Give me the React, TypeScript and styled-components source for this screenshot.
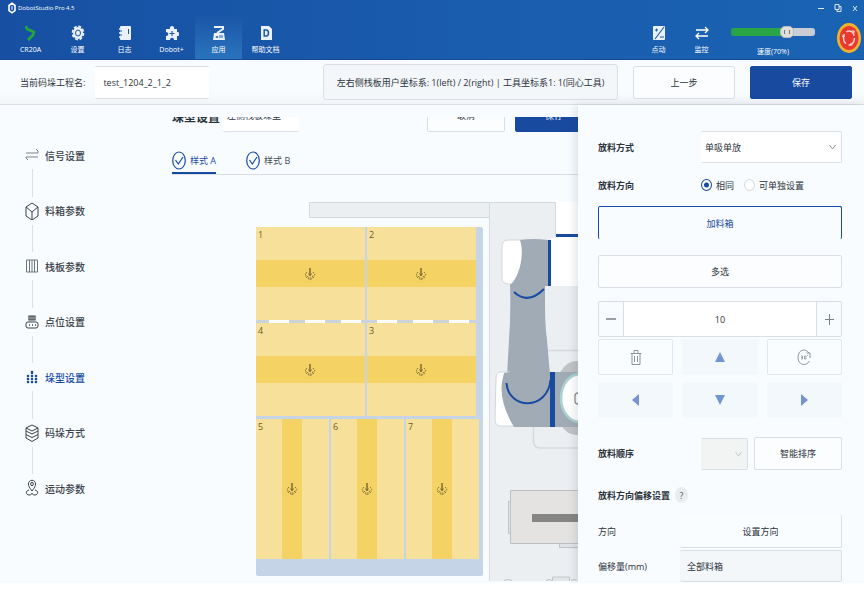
import React, { useState } from "react";
import styled, { createGlobalStyle, css } from "styled-components";

const blue = "#184a9f";
const line = "#d9dfe4";
const ink = "#2b333b";

const GlobalStyle = createGlobalStyle`
  * { box-sizing: border-box; }
  body { margin: 0; background: #fff; }
  body, button, input, select {
    font-family: "Open Sans", "Noto Sans CJK SC", sans-serif;
    font-size: 9px;
    color: ${ink};
  }
  button { padding: 0; cursor: pointer; }
  svg { display: block; }
`;

/* ---------- header ---------- */

const Header = styled.header`
  background: linear-gradient(90deg, #1750a3, #1a5dae 60%, #1a63b3);
  border-bottom: 1px solid #164a94;
  color: #fff;
`;

const TitleBar = styled.div`
  display: flex;
  align-items: center;
  height: 16px;
  padding: 0 5px 0 8px;
  gap: 2px;
  font-size: 6px;
`;

const WindowButtons = styled.div`
  display: flex;
  gap: 9px;
  margin-left: auto;
`;

const WindowButton = styled.button`
  width: 8px;
  height: 10px;
  border: 0;
  background: none;
  color: #fff;
`;

const Toolbar = styled.div`
  display: flex;
  height: 43px;
  padding-left: 7px;
`;

const Tool = styled.button<{ $active?: boolean; $narrow?: boolean }>`
  display: flex;
  flex-direction: column;
  align-items: center;
  justify-content: center;
  gap: 3px;
  width: ${(p) => (p.$narrow ? 43 : 47)}px;
  padding-top: 5px;
  border: 0;
  background: ${(p) => (p.$active ? "linear-gradient(#1b56a7, #2a74bd)" : "none")};
  color: #fff;
  font-size: 7px;
  line-height: 11px;
  white-space: nowrap;
`;

const ToolbarEnd = styled.div`
  display: flex;
  margin-left: auto;
  padding-right: 3px;
`;

const Speed = styled.label`
  display: flex;
  flex-direction: column;
  align-items: center;
  gap: 8px;
  width: 84px;
  margin: 10px 22px 0 8px;
  font-size: 7px;
  line-height: 11px;
`;

const SpeedRange = styled.input<{ $value: number }>`
  appearance: none;
  width: 100%;
  height: 12px;
  margin: 0;
  background: none;
  &::-webkit-slider-runnable-track {
    height: 8px;
    border-radius: 3px;
    background: linear-gradient(90deg, #2aa545 ${(p) => p.$value}%, #c9ced6 ${(p) => p.$value}%);
  }
  &::-webkit-slider-thumb {
    appearance: none;
    width: 14px;
    height: 12px;
    margin-top: -2px;
    border: 1px solid #b9b9b9;
    border-radius: 5px;
    background:
      linear-gradient(90deg, transparent 3px, #777 3px 4px, transparent 4px 8px, #777 8px 9px, transparent 9px) center / 100% 4px no-repeat,
      #dedede;
  }
`;

const StopButton = styled.button`
  align-self: center;
  border: 0;
  background: none;
`;

/* ---------- project bar ---------- */

const ProjectBar = styled.div`
  display: flex;
  align-items: center;
  gap: 15px;
  height: 45px;
  padding: 0 12px 0 20px;
  border-bottom: 1px solid ${line};
  background: linear-gradient(#f8fcff 70%, #f2f5f8);
`;

const ProjectLabel = styled.label`
  display: flex;
  align-items: center;
  gap: 10px;
  margin-right: auto;
  white-space: nowrap;
`;

const ProjectInput = styled.input`
  width: 114px;
  height: 33px;
  padding: 0 8px;
  border: 1px solid ${line};
  border-width: 1px 0;
  border-radius: 2px;
  background: #fff;
`;

const StatusBox = styled.div`
  display: flex;
  align-items: center;
  justify-content: center;
  min-width: 295px;
  height: 36px;
  border: 1px solid ${line};
  border-radius: 3px;
  background: #f4f7fa;
  white-space: nowrap;
`;

const Button = styled.button<{ $kind?: "primary" | "outline"; $width?: number }>`
  flex-shrink: 0;
  width: ${(p) => (p.$width ? p.$width + "px" : "100%")};
  height: 33px;
  border: 1px solid ${line};
  border-radius: 2px;
  background: #fbfdff;
  ${(p) =>
    p.$kind === "primary" &&
    css`
      border-color: ${blue};
      background: ${blue};
      color: #fff;
    `}
  ${(p) =>
    p.$kind === "outline" &&
    css`
      border-color: ${blue};
      border-bottom: 0;
      background: #f8fcff;
      color: ${blue};
    `}
`;

/* ---------- body ---------- */

const Body = styled.div`
  display: grid;
  grid-template-columns: 172px minmax(0, 1fr) 286px;
  background: #f8fcff;
`;

const StepsNav = styled.nav`
  display: flex;
`;

const Steps = styled.ol`
  display: flex;
  flex-direction: column;
  margin: 0;
  padding: 41px 0 86px 24px;
  list-style: none;
`;

const StepItem = styled.li`
  display: flex;
  flex-direction: column;
  &:not(:last-child) {
    flex: 1;
  }
  &:not(:last-child)::after {
    content: "";
    flex: 1;
    width: 1px;
    margin: 5px 0 5px 8px;
    background: #dcdfe4;
  }
`;

const StepLink = styled.a<{ $active: boolean }>`
  display: flex;
  align-items: center;
  gap: 5px;
  height: 18px;
  color: ${(p) => (p.$active ? blue : "#3b424a")};
  font-size: 10px;
  font-weight: 500;
  text-decoration: none;
`;

const Main = styled.main`
  display: flex;
  flex-direction: column;
  padding-top: 12px;
`;

const Viewport = styled.div`
  display: flex;
  flex: 1;
  flex-direction: column;
  overflow: hidden;
`;

const SettingsRow = styled.div`
  display: flex;
  align-items: center;
  margin: -18px -15px 0 0;
  gap: 10px;
`;

const Heading = styled.h2`
  flex-shrink: 0;
  width: 41px;
  margin: 2px 0 0;
  font-size: 12px;
  font-weight: 700;
  white-space: nowrap;
`;

const PatternSelect = styled.select`
  appearance: none;
  width: 76px;
  height: 33px;
  margin-right: auto;
  padding: 0 4px;
  border: 0;
  border-bottom: 1px solid ${line};
  border-radius: 2px;
  background: #fff;
`;

const Tabs = styled.div`
  display: flex;
  gap: 30px;
  height: 43px;
  padding-top: 17px;
  border-bottom: 1px solid ${line};
`;

const Tab = styled.button<{ $active: boolean }>`
  display: flex;
  align-items: center;
  gap: 4px;
  border: 0;
  border-bottom: 2px solid ${(p) => (p.$active ? blue : "transparent")};
  background: none;
  color: ${(p) => (p.$active ? blue : "#454c54")};
`;

const Scene = styled.div`
  position: relative;
  flex: 1;
  padding: 52px 0 7px 84px;
`;

const SceneDrawing = styled.svg`
  position: absolute;
  inset: 0;
  width: 100%;
  height: 100%;
`;

const Pallet = styled.div`
  position: relative;
  width: 227px;
  padding: 0 4px 17px 0;
  border-radius: 2px;
  background: #c6d4e7;
`;

const BoxRow = styled.div<{ $columns: number }>`
  display: grid;
  grid-template-columns: repeat(${(p) => p.$columns}, 1fr);
  gap: 2px;
  height: ${(p) => (p.$columns === 3 ? 140 : 93)}px;
  margin-right: ${(p) => (p.$columns === 3 ? 0 : 3)}px;
`;

const Dashes = styled.div`
  height: 3px;
  margin-right: 3px;
  background: repeating-linear-gradient(90deg, #cbd3db 0 13px, #fff 13px 33px, #cbd3db 33px 36px);
`;

const RowGap = styled.div`
  height: 3px;
`;

const Box = styled.div<{ $vertical?: boolean }>`
  position: relative;
  display: flex;
  align-items: center;
  justify-content: center;
  padding-right: 2px;
  color: #6b5c2c;
  background: ${(p) =>
    p.$vertical
      ? "linear-gradient(90deg, #f7e19a 36%, #f4d264 36% 63%, #f7e19a 63%)"
      : "linear-gradient(#f7e19a 36%, #f4d264 36% 64%, #f7e19a 64%)"};
`;

const BoxNumber = styled.span`
  position: absolute;
  top: 2px;
  left: 2px;
  font-size: 9px;
  line-height: 12px;
`;

/* ---------- side panel ---------- */

const Panel = styled.aside`
  position: relative;
  display: flex;
  flex-direction: column;
  padding: 26px 22px 1px 20px;
  background: #f9fcff;
  box-shadow: -3px 0 8px rgba(60, 70, 90, 0.14);
`;

const Field = styled.div<{ $top?: number; $label?: number }>`
  display: grid;
  grid-template-columns: ${(p) => p.$label ?? 103}px minmax(0, 1fr);
  align-items: center;
  margin-top: ${(p) => p.$top ?? 0}px;
`;

const FieldLabel = styled.label<{ $strong?: boolean }>`
  font-weight: ${(p) => (p.$strong ? 600 : 400)};
  white-space: nowrap;
`;

const SelectWrap = styled.div`
  display: grid;
  align-items: center;
  > * {
    grid-area: 1 / 1;
  }
  > svg {
    justify-self: end;
    margin-right: 6px;
    pointer-events: none;
  }
`;

const Select = styled.select`
  appearance: none;
  width: 100%;
  height: 32px;
  padding: 0 3px;
  border: 1px solid ${line};
  border-left-color: transparent;
  border-radius: 2px;
  background: #fff;
  opacity: 1;
  &:disabled {
    background: #f2f3f3;
  }
`;

const RadioGroup = styled.div`
  display: flex;
  align-items: center;
  gap: 10px;
  height: 14px;
`;

const RadioLabel = styled.label`
  display: flex;
  align-items: center;
  gap: 4px;
`;

const Radio = styled.input`
  appearance: none;
  width: 11px;
  height: 12px;
  margin: 0;
  border: 1px solid #d6dade;
  border-radius: 50%;
  background: #fff;
  &:checked {
    border-color: ${blue};
    background: radial-gradient(circle, ${blue} 2px, #fff 3px);
  }
`;

const Stack = styled.div`
  display: flex;
  flex-direction: column;
  gap: 16px;
  margin-top: 14px;
`;

const Stepper = styled.div`
  display: grid;
  grid-template-columns: 24px 1fr 24px;
  height: 36px;
  margin-top: 13px;
  border: 1px solid ${line};
  border-radius: 2px;
`;

const StepperButton = styled.button`
  display: grid;
  place-items: center;
  border: 0;
  background: none;
  color: #7b8188;
`;

const StepperInput = styled.input`
  width: 100%;
  border: 1px solid ${line};
  border-width: 0 1px;
  background: #fff;
  text-align: center;
`;

const PadGrid = styled.div`
  display: grid;
  grid-template-columns: repeat(3, 1fr);
  gap: 7px 9px;
  margin-top: 2px;
`;

const PadButton = styled.button<{ $framed?: boolean }>`
  display: grid;
  place-items: center;
  height: 36px;
  border: 1px solid ${(p) => (p.$framed ? "#e3e8ec" : "#f4f9fd")};
  border-radius: 2px;
  background: ${(p) => (p.$framed ? "#fafdff" : "#f3f8fc")};
  color: ${(p) => (p.$framed ? "#8d949b" : "#7296cf")};
`;

const OrderControls = styled.div`
  display: grid;
  grid-template-columns: 47px minmax(0, 1fr);
  gap: 6px;
`;

const OffsetTitle = styled.div`
  display: flex;
  align-items: center;
  gap: 5px;
  height: 16px;
  margin-top: 17px;
  font-weight: 600;
`;

const HelpButton = styled.button`
  width: 13px;
  height: 16px;
  border: 0;
  border-radius: 50%;
  background: #e9edf0;
  color: #555c63;
`;

const DirectionButton = styled.button`
  width: 100%;
  height: 33px;
  border: 1px solid ${line};
  border-width: 0 1px 1px 0;
  border-radius: 2px;
  background: #fafdff;
`;

const OffsetInput = styled.input`
  width: 100%;
  height: 32px;
  padding: 0 7px;
  border: 1px solid ${line};
  border-left: 0;
  border-radius: 2px;
  background: #f4f7fa;
`;

/* ---------- icons ---------- */

const Chevron = ({ color = "#8b9197" }: { color?: string }) => (
  <svg width="7" height="6" viewBox="0 0 7 6" fill="none" stroke={color}>
    <path d="M.5 1 3.5 5l3-4" />
  </svg>
);

const LogoIcon = () => (
  <svg width="8" height="12" viewBox="0 0 8 12" fill="none" stroke="#fff" strokeWidth="1.6">
    <path d="M4 1.2 7 3.5v5L4 10.8 1 8.5v-5z" />
    <path d="M4 4v4" strokeWidth="1" />
  </svg>
);

const robotIcon = (
  <path d="m2 1 1 3 7 3-1 3-5 5" fill="none" stroke="#25a63d" strokeWidth="2.6" strokeLinejoin="round" />
);
const gearIcon = (
  <>
    <ellipse cx="7" cy="8" rx="5" ry="6" fill="#eaf1fb" />
    <ellipse cx="7" cy="8" rx="5.4" ry="6.6" fill="none" stroke="#eaf1fb" strokeWidth="1.8" strokeDasharray="3 1.7" />
    <ellipse cx="7" cy="8" rx="2.5" ry="3" fill="none" stroke="#1c55a8" />
  </>
);
const logIcon = (
  <>
    <rect x="2" y="1" width="11" height="14" rx="1" fill="#eaf1fb" />
    <path d="M1 4h3M1 8h3M1 12h3" stroke="#eaf1fb" strokeWidth="1.5" />
    <path d="M2 6h2M2 10h2M10.5 4v5" stroke="#1c55a8" strokeWidth="1" />
  </>
);
const pluginIcon = (
  <>
    <path d="M2 4h3C4 0 10 0 9 4h3v3c3-1 3 5 0 4v4H9c0-3-4-3-4 0H1v-4c3 0 3-4 0-4V4z" fill="#eaf1fb" />
    <path d="M7 6v5M4.5 8.5h5" stroke="#1c55a8" strokeWidth="1.1" />
  </>
);
const appIcon = (
  <>
    <path d="M2 2h9v2L5 8" fill="none" stroke="#eaf1fb" strokeWidth="2" />
    <path d="M2 8h10l1 7H1z" fill="#eaf1fb" />
    <path d="m4 13 1-2 1 2m2-3v3m2-3v3" stroke="#2564b0" fill="none" />
  </>
);
const docIcon = (
  <>
    <path d="M2 1h8l3 3v11H2z" fill="#eaf1fb" />
    <path d="M5.2 5h2c3 0 3 6 0 6h-2z" fill="none" stroke="#1c55a8" strokeWidth="1.5" />
  </>
);
const jogIcon = (
  <>
    <rect x="1" y="1" width="12" height="14" rx="1" fill="#eaf1fb" />
    <path d="M12 2 3 14M3 5h3M4.5 3.5v3M8 12h4" stroke="#1b5dad" strokeWidth="1.1" />
  </>
);
const monitorIcon = (
  <path d="M1 5h12M10 2l3 3-3 3M13 11H1M4 8l-3 3 3 3" fill="none" stroke="#fff" strokeWidth="1.3" />
);

const ToolIcon = ({ children }: { children: React.ReactNode }) => (
  <svg width="14" height="16" viewBox="0 0 14 16">{children}</svg>
);

const StopIcon = () => (
  <svg width="24" height="32" viewBox="0 0 24 32">
    <ellipse cx="12" cy="16" rx="12" ry="15" fill="#f2b22b" />
    <ellipse cx="12" cy="16" rx="9.5" ry="12" fill="#e8382f" />
    <ellipse cx="12" cy="16" rx="5.5" ry="7" fill="none" stroke="#ffd2ca" strokeWidth="1.5" strokeDasharray="10.2 3" />
    <path d="m5 15 1-3 2 3zM15 8l3 1-1 3zM16 23l-3 1v-3z" fill="#ffd2ca" />
  </svg>
);

const CheckIcon = () => (
  <svg width="14" height="19" viewBox="0 0 14 19" fill="none" stroke={blue} strokeWidth="1.2">
    <ellipse cx="7" cy="9.5" rx="6.3" ry="8.5" />
    <path d="m3.5 9 2.8 4L11 6" />
  </svg>
);

const stepIcons: React.ReactNode[] = [
  <path d="M2 7h12V5l-2-2M14 11H2v1l2 2" stroke="#7c838b" />,
  <path d="M8 1l6 4v9l-6 4-6-4V5zM2 5l6 5 6-5M8 10v8" />,
  <path d="M2.5 3h11v12h-11zM5.500 3v12M8 3v12M10.500 3v12" stroke="#6f767e" />,
  <>
    <path d="M5 3h6v4H5zM7 3v4m2-4v4" strokeWidth="1.2" />
    <rect x="2" y="9" width="12" height="6" rx="2" />
    <path d="M5 12h1m2 0h1m2 0h1" strokeWidth="1.5" />
  </>,
  <path
    d="M7 3h2v3H7zM3 7h2v2H3zM7 7h2v2H7zM11 7h2v2h-2zM3 10h2v2H3zM7 10h2v2H7zM11 10h2v2h-2zM3 13h2v2H3zM7 13h2v2H7zM11 13h2v2h-2z"
    fill="currentColor"
    strokeWidth=".3"
  />,
  <path d="m8 1 6 3-6 3-6-3zM2 4v3l6 3 6-3V4M2 7v3.500l6 3 6-3V7M2 10.500V14l6 3.500 6-3.500v-3.500" />,
  <>
    <path d="M8 12C5 8 4.500 7 4.500 5c0-5 7-5 7 0 0 2-.5 3-3.500 7zM5 11c-4 1-3 5 0 5 2 0 3-1 3-2 0 1 1 2 3 2 3 0 4-4 0-5" />
    <ellipse cx="8" cy="5" rx="1.3" ry="1.700" />
  </>,
];

const StepIcon = ({ index }: { index: number }) => (
  <svg width="16" height="18" viewBox="0 0 16 18" fill="none" stroke="currentColor" strokeWidth="1">
    {stepIcons[index]}
  </svg>
);

const PlaceIcon = () => (
  <svg width="12" height="14" viewBox="0 0 12 14" fill="none" stroke="currentColor" strokeWidth=".8">
    <path d="M6 1v7" strokeWidth="1.300" />
    <path d="M4.500 6.500 6 9l1.500-2.500" />
    <path d="M3 5 1 7.500l5 4 5-4L9 5M1.500 9.500l4.500 3.500 4.500-3.500" strokeDasharray="2 1" />
  </svg>
);

const TrashIcon = () => (
  <svg width="12" height="15" viewBox="0 0 12 15" fill="none" stroke="currentColor">
    <path d="M.5 3.500h11M4 3.500v-3h4v3M2 3.500v11h8v-11M4.500 6v6M7.500 6v6" />
  </svg>
);

const RotateIcon = () => (
  <svg width="14" height="17" viewBox="0 0 14 17" fill="none" stroke="currentColor">
    <path d="M12 4C8-1.500 1 1 1 8.500S9 18 12.500 12M13 9V4H9.500" />
    <path d="M4 7h1.500v3H4m0-1.500h1.500M7.500 7H9v3H7.500zM10.500 6v1" strokeWidth=".8" />
  </svg>
);

const arrows = {
  up: "M6 1 11 11H1z",
  down: "M1 1h10L6 11z",
  left: "M9 0v12L2 6z",
  right: "M3 0v12l7-6z",
};

const ArrowIcon = ({ dir }: { dir: keyof typeof arrows }) => (
  <svg width="12" height="12" viewBox="0 0 12 12" fill="currentColor">
    <path d={arrows[dir]} />
  </svg>
);

const RobotScene = () => (
  <SceneDrawing aria-hidden="true">
    <g transform="translate(-172 -175)">
      <path d="M309.500 202.500H556V238H700V581H489.500V217.500H309.500z" fill="#ebeff2" />
      <path d="M489 217.500H309.500v-15H555.500V236M489.500 202.500V581" fill="none" stroke="#d5dadd" />
      <path d="M556 202h144v33H556z" fill="#fff" />
      <path d="M556 234h144v3H556z" fill={blue} />
      <path d="M551 238h149v48H551z" fill="#fff" />
      <path d="M545 350.500H700M533.500 425v16q0 7 7 7H700" fill="none" stroke="#d6dadd" strokeWidth="1.500" />
      <ellipse cx="576" cy="398" rx="22" ry="37" fill="#c0c2c5" />
      <path d="M526 240h-18q-6 0-6 7v31q0 6 7 6h17z" fill="#fff" stroke="#d3d7da" />
      <path d="M520 240q14-2 28 0v46h-3v19q0 20 2 35l3 35h-43l2-35q2-27 1-55c9-7 15-30 10-45z" fill="#a0abb6" />
      <path d="M548 240h3v46h-3z" fill={blue} />
      <path d="M514 292q14 13 30-3" fill="none" stroke={blue} strokeWidth="2" />
      <path d="M510 372h-9q-5 0-5 6l-1 41q0 7 5 7h17z" fill="#fff" stroke="#d3d7da" />
      <path d="M504 373q19-4 46-1v55h-36q-15-25-12-45z" fill="#a0abb6" />
      <path d="M555 372h145v55H555z" fill="#a0abb6" />
      <path d="M550 372h5v55h-5z" fill={blue} />
      <path d="M506.500 383c2 27 41 28 44-3" fill="none" stroke={blue} strokeWidth="2" />
      <ellipse cx="580" cy="398" rx="19" ry="24" fill="#fff" stroke="#a7d2cf" strokeWidth="2.500" />
      <rect x="575" y="393" width="9" height="11" rx="3" fill="none" stroke="#8c9195" strokeWidth="1.300" />
      <path d="M511 501.500h-2.500v32h2.500M559.500 544v3.500H700" fill="#e1e3e5" stroke="#bdc3c8" />
      <path d="M510.500 490.500H700v53H510.500z" fill="#e4e3e2" stroke="#bdc0c2" />
      <path d="M532 514h168v8H532z" fill="#858583" />
      <path d="M552.500 581v-4h17v4M504 580.500q4-2 8 0M546 580.500q3-2 6 0M571 580.500q3-2 6 0" fill="#e4e5e6" stroke="#c2c6c9" />
    </g>
  </SceneDrawing>
);

/* ---------- page ---------- */

const steps = ["信号设置", "料箱参数", "栈板参数", "点位设置", "垛型设置", "码垛方式", "运动参数"];

const tools = [
  { label: "CR20A", icon: robotIcon },
  { label: "设置", icon: gearIcon },
  { label: "日志", icon: logIcon },
  { label: "Dobot+", icon: pluginIcon },
  { label: "应用", icon: appIcon, active: true },
  { label: "帮助文档", icon: docIcon },
];

const PalletRow = ({ numbers }: { numbers: number[] }) => (
  <BoxRow $columns={numbers.length}>
    {numbers.map((n) => (
      <Box key={n} $vertical={numbers.length === 3}>
        <BoxNumber>{n}</BoxNumber>
        <PlaceIcon />
      </Box>
    ))}
  </BoxRow>
);

export default function App() {
  const [project, setProject] = useState("test_1204_2_1_2");
  const [speed, setSpeed] = useState(70);
  const [tab, setTab] = useState("A");
  const [direction, setDirection] = useState("same");
  const [distance, setDistance] = useState(10);

  return (
    <>
      <GlobalStyle />
      <Header>
        <TitleBar>
          <LogoIcon />
          <span>DobotStudio Pro 4.5</span>
          <WindowButtons>
            <WindowButton aria-label="最小化">
              <svg width="8" height="10" viewBox="0 0 8 10" stroke="#dce8f6"><path d="M1 5.500h6" /></svg>
            </WindowButton>
            <WindowButton aria-label="还原">
              <svg width="8" height="10" viewBox="0 0 8 10" fill="none" stroke="#dce8f6"><path d="M1 1.500h4v5H1zM5 3.500h2v5H3v-2" /></svg>
            </WindowButton>
            <WindowButton aria-label="关闭">
              <svg width="8" height="10" viewBox="0 0 8 10" stroke="#dce8f6"><path d="m2 3 4 5M6 3 2 8" /></svg>
            </WindowButton>
          </WindowButtons>
        </TitleBar>
        <Toolbar>
          {tools.map((t) => (
            <Tool key={t.label} $active={t.active}>
              <ToolIcon>{t.icon}</ToolIcon>
              {t.label}
            </Tool>
          ))}
          <ToolbarEnd>
            <Tool $narrow>
              <ToolIcon>{jogIcon}</ToolIcon>
              点动
            </Tool>
            <Tool $narrow>
              <ToolIcon>{monitorIcon}</ToolIcon>
              监控
            </Tool>
            <Speed>
              <SpeedRange type="range" min={0} max={100} value={speed} $value={speed} onChange={(e) => setSpeed(Number(e.target.value))} />
              <span>速度({speed}%)</span>
            </Speed>
            <StopButton aria-label="急停">
              <StopIcon />
            </StopButton>
          </ToolbarEnd>
        </Toolbar>
      </Header>

      <ProjectBar>
        <ProjectLabel>
          当前码垛工程名:
          <ProjectInput value={project} onChange={(e) => setProject(e.target.value)} />
        </ProjectLabel>
        <StatusBox>左右侧栈板用户坐标系: 1(left) / 2(right) | 工具坐标系1: 1(同心工具)</StatusBox>
        <Button $width={102}>上一步</Button>
        <Button $width={102} $kind="primary">保存</Button>
      </ProjectBar>

      <Body>
        <StepsNav>
          <Steps>
            {steps.map((label, i) => (
              <StepItem key={label}>
                <StepLink href="#" $active={i === 4} aria-current={i === 4 ? "step" : undefined}>
                  <StepIcon index={i} />
                  {label}
                </StepLink>
              </StepItem>
            ))}
          </Steps>
        </StepsNav>

        <Main>
          <Viewport>
            <SettingsRow>
              <Heading>垛型设置</Heading>
              <PatternSelect aria-label="垛型设置">
                <option>左侧栈板垛型</option>
              </PatternSelect>
              <Button $width={78}>取消</Button>
              <Button $width={78} $kind="primary">保存</Button>
            </SettingsRow>
            <Tabs role="tablist">
              {["A", "B"].map((t) => (
                <Tab key={t} role="tab" aria-selected={tab === t} $active={tab === t} onClick={() => setTab(t)}>
                  <CheckIcon />
                  样式 {t}
                </Tab>
              ))}
            </Tabs>
            <Scene>
              <RobotScene />
              <Pallet>
                <PalletRow numbers={[1, 2]} />
                <Dashes />
                <PalletRow numbers={[4, 3]} />
                <RowGap />
                <PalletRow numbers={[5, 6, 7]} />
              </Pallet>
            </Scene>
          </Viewport>
        </Main>

        <Panel>
          <Field>
            <FieldLabel $strong htmlFor="mode">放料方式</FieldLabel>
            <SelectWrap>
              <Select id="mode">
                <option>单吸单放</option>
              </Select>
              <Chevron />
            </SelectWrap>
          </Field>
          <Field $top={15}>
            <FieldLabel as="span" $strong id="direction-label">放料方向</FieldLabel>
            <RadioGroup role="radiogroup" aria-labelledby="direction-label">
              <RadioLabel>
                <Radio type="radio" name="direction" checked={direction === "same"} onChange={() => setDirection("same")} />
                相同
              </RadioLabel>
              <RadioLabel>
                <Radio type="radio" name="direction" checked={direction === "single"} onChange={() => setDirection("single")} />
                可单独设置
              </RadioLabel>
            </RadioGroup>
          </Field>
          <Stack>
            <Button $kind="outline">加料箱</Button>
            <Button>多选</Button>
          </Stack>
          <Stepper>
            <StepperButton aria-label="减少" onClick={() => setDistance(distance - 1)}>
              <svg width="10" height="10" viewBox="0 0 10 10" stroke="currentColor" strokeWidth="1.500"><path d="M0 5h10" /></svg>
            </StepperButton>
            <StepperInput aria-label="移动距离" value={distance} onChange={(e) => setDistance(Number(e.target.value) || 0)} />
            <StepperButton aria-label="增加" onClick={() => setDistance(distance + 1)}>
              <svg width="9" height="11" viewBox="0 0 9 11" stroke="currentColor"><path d="M0 5.500h9M4.500 0v11" /></svg>
            </StepperButton>
          </Stepper>
          <PadGrid>
            <PadButton $framed aria-label="删除"><TrashIcon /></PadButton>
            <PadButton aria-label="上移"><ArrowIcon dir="up" /></PadButton>
            <PadButton $framed aria-label="旋转90°"><RotateIcon /></PadButton>
            <PadButton aria-label="左移"><ArrowIcon dir="left" /></PadButton>
            <PadButton aria-label="下移"><ArrowIcon dir="down" /></PadButton>
            <PadButton aria-label="右移"><ArrowIcon dir="right" /></PadButton>
          </PadGrid>
          <Field $top={19}>
            <FieldLabel $strong htmlFor="order">放料顺序</FieldLabel>
            <OrderControls>
              <SelectWrap>
                <Select id="order" disabled />
                <Chevron color="#c3c7ca" />
              </SelectWrap>
              <Button>智能排序</Button>
            </OrderControls>
          </Field>
          <OffsetTitle>
            放料方向偏移设置
            <HelpButton aria-label="帮助">?</HelpButton>
          </OffsetTitle>
          <Field $top={12} $label={82}>
            <FieldLabel htmlFor="set-direction">方向</FieldLabel>
            <DirectionButton id="set-direction">设置方向</DirectionButton>
          </Field>
          <Field $top={2} $label={82}>
            <FieldLabel htmlFor="offset">偏移量(mm)</FieldLabel>
            <OffsetInput id="offset" defaultValue="全部料箱" />
          </Field>
        </Panel>
      </Body>
    </>
  );
}
